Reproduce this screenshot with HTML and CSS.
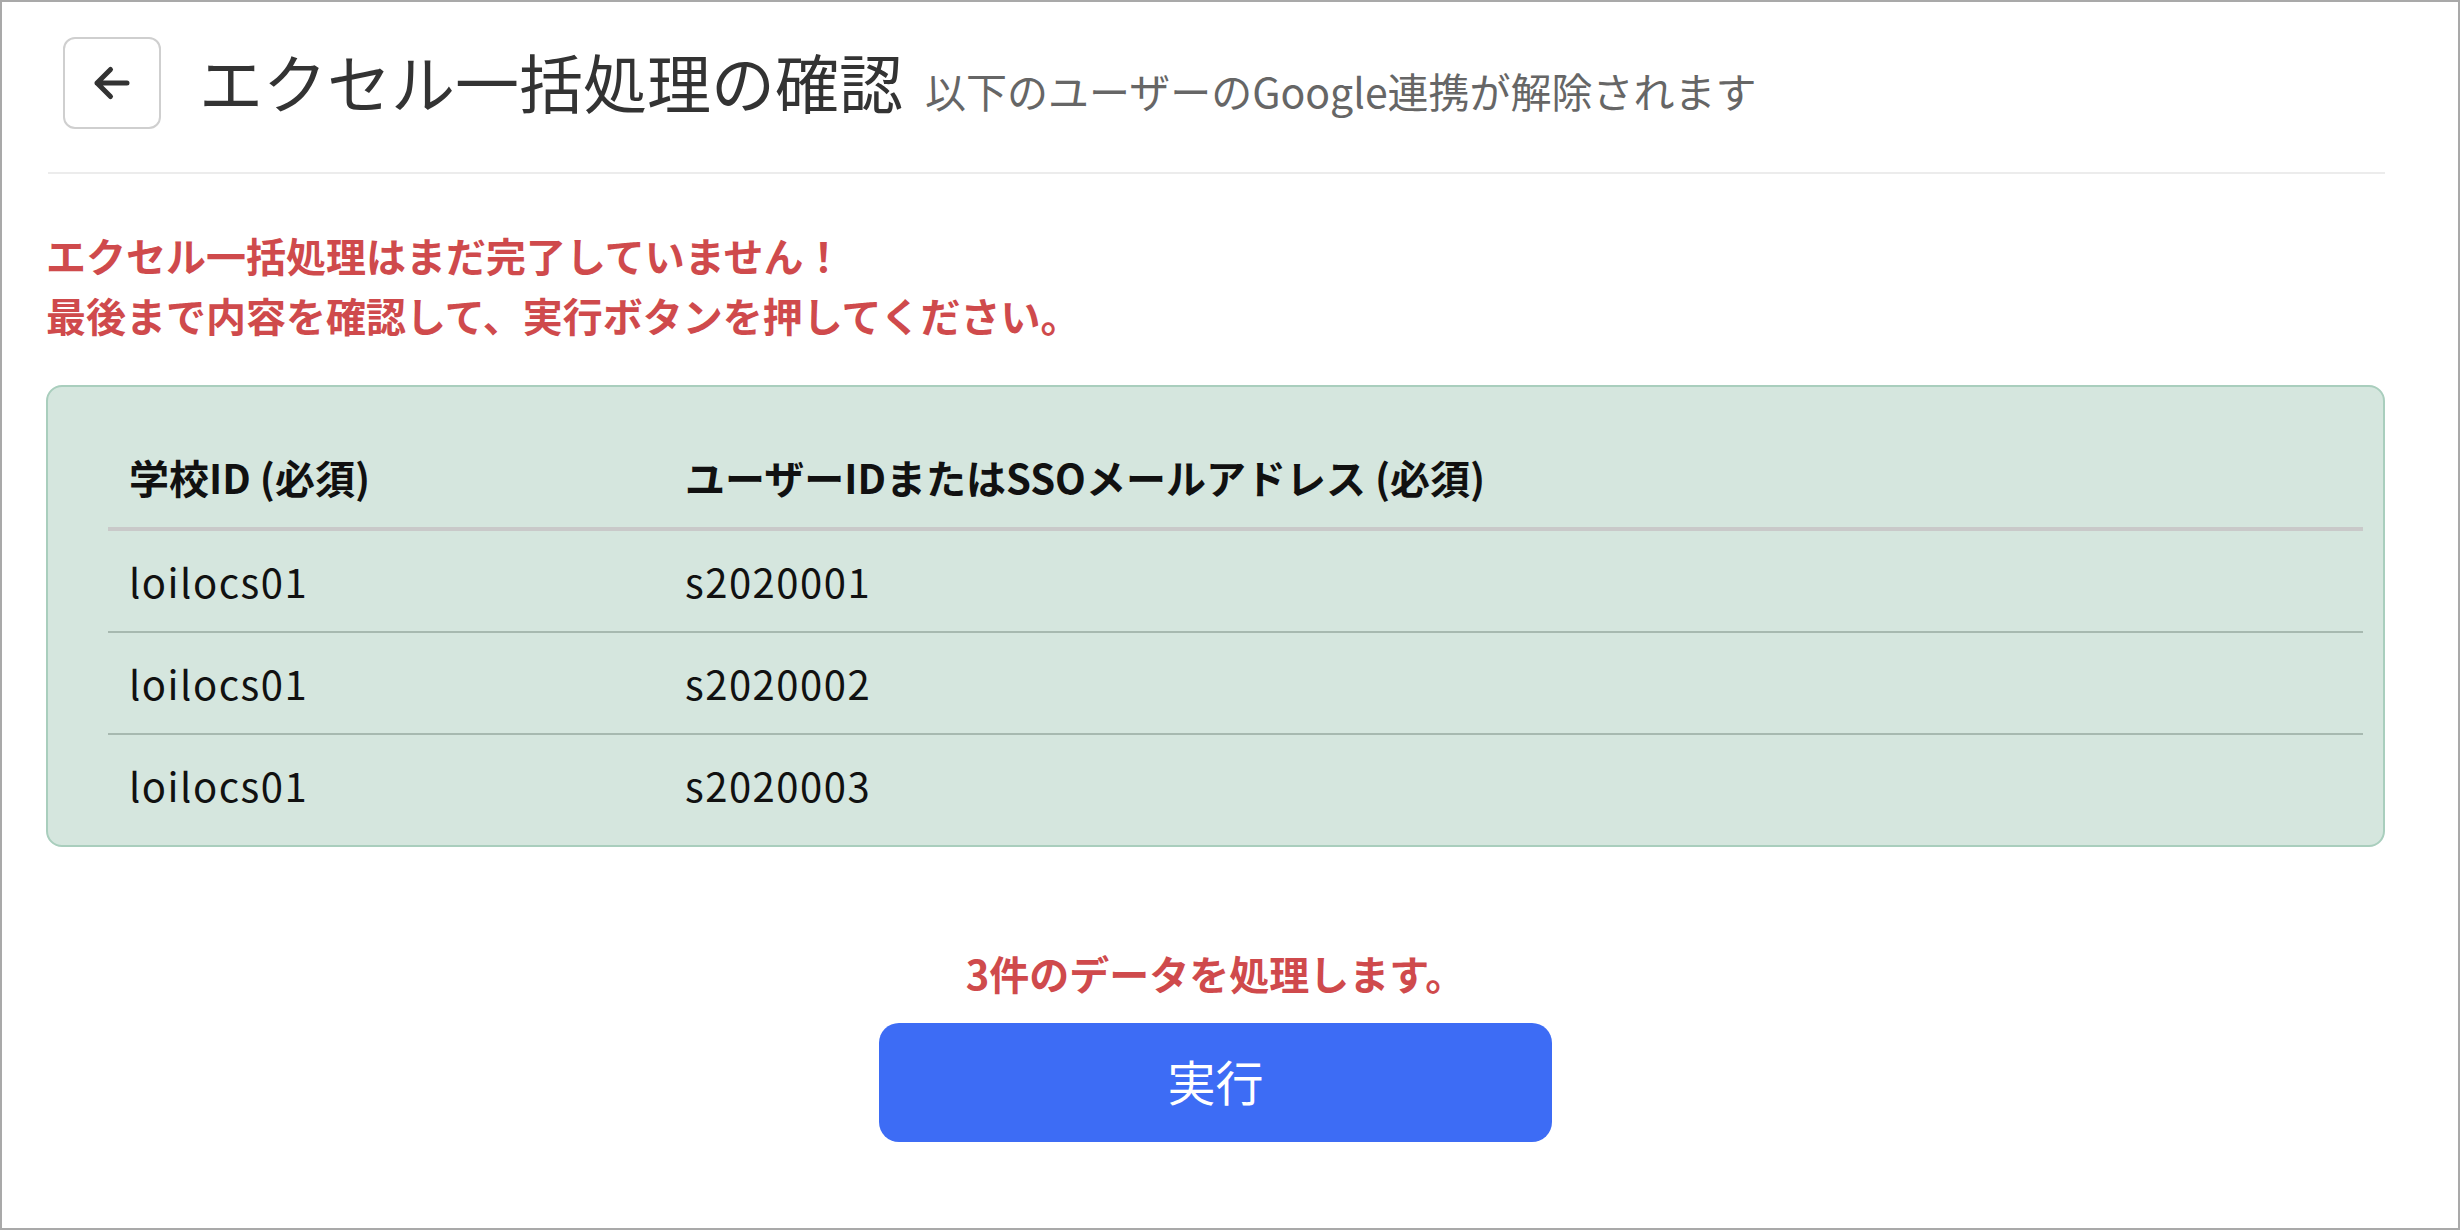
FILE: index.html
```html
<!DOCTYPE html>
<html lang="ja">
<head>
<meta charset="utf-8">
<title>エクセル一括処理の確認</title>
<link rel="stylesheet" href="styles.css">
</head>
<body>
<div class="frame">
  <main class="page">
    <header class="head">
      <button class="back" type="button" aria-label="戻る">
        <svg width="40" height="36" viewBox="0 0 40 36" aria-hidden="true">
          <path d="M5 18 H35 M5 18 L18.5 4.5 M5 18 L18.5 31.5" fill="none" stroke="#333" stroke-width="5" stroke-linecap="round" stroke-linejoin="round"/>
        </svg>
      </button>
      <div class="titles">
        <h1 class="title">エクセル一括処理の確認</h1>
        <span class="sub">以下のユーザーのGoogle連携が解除されます</span>
      </div>
    </header>
    <hr class="rule">
    <div class="warn">
      <p>エクセル一括処理はまだ完了していません！</p>
      <p>最後まで内容を確認して、実行ボタンを押してください。</p>
    </div>
    <div class="tablebox">
      <table class="data">
        <thead>
          <tr><th class="c1">学校ID (必須)</th><th>ユーザーIDまたはSSOメールアドレス (必須)</th></tr>
        </thead>
        <tbody>
          <tr><td class="c1">loilocs01</td><td>s2020001</td></tr>
          <tr><td class="c1">loilocs01</td><td>s2020002</td></tr>
          <tr><td class="c1">loilocs01</td><td>s2020003</td></tr>
        </tbody>
      </table>
    </div>
    <p class="count">3件のデータを処理します。</p>
    <div class="actions">
      <button class="run" type="button">実行</button>
    </div>
  </main>
</div>
</body>
</html>
```

FILE: styles.css
```css
* { box-sizing: border-box; }
html, body { margin: 0; padding: 0; background: #fff; }
body {
  font-family: "Noto Sans CJK JP", "Noto Sans", sans-serif;
  color: #222;
}
.frame {
  width: 2460px;
  height: 1230px;
  border: 2px solid #a9a9a9;
  overflow: hidden;
}
.page {
  margin-left: 44px;
  width: 2339px;
  padding-top: 35px;
}
.head {
  display: flex;
  align-items: center;
  height: 92px;
  padding-left: 17px;
}
.back {
  width: 98px;
  height: 92px;
  border: 2px solid #cfcfcf;
  border-radius: 12px;
  background: #fff;
  display: flex;
  align-items: center;
  justify-content: center;
  padding: 0;
  flex: none;
}
.back svg { display: block; }
.titles {
  display: flex;
  align-items: baseline;
  margin-left: 38px;
  gap: 22px;
  padding-bottom: 6px;
}
.title {
  margin: 0;
  font-size: 64px;
  font-weight: 400;
  color: #333;
  line-height: 80px;
}
.sub {
  font-size: 41px;
  color: #666;
}
.rule {
  border: 0;
  height: 2px;
  background: #ececec;
  margin: 43px 0 0 2px;
}
.warn {
  margin-top: 51px;
  color: #cf4a4c;
  font-weight: 700;
  font-size: 40px;
  line-height: 60px;
}
.warn p { margin: 0; }
.tablebox {
  margin-top: 40px;
  background: #d5e6de;
  border: 2px solid #a9cebd;
  border-radius: 16px;
  padding: 40px 20px 10px 60px;
}
.data {
  width: 100%;
  border-collapse: separate;
  border-spacing: 0;
  font-size: 40px;
  line-height: 40px;
  color: #111;
}
.data th, .data td {
  text-align: left;
  padding: 30px 21px;
}
.data td { letter-spacing: 1.5px; }
.data th {
  font-weight: 700;
  border-bottom: 4px solid #c9c9c9;
}
.data .c1 { width: 556px; }
.data tbody tr:not(:last-child) td { border-bottom: 2px solid #a7b9b0; }
.count {
  margin: 96px 0 0;
  text-align: center;
  color: #cf4a4c;
  font-weight: 700;
  font-size: 40px;
  line-height: 60px;
}
.actions {
  display: flex;
  justify-content: center;
  margin-top: 20px;
}
.run {
  width: 673px;
  height: 119px;
  border: 0;
  border-radius: 20px;
  background: #3d6cf5;
  color: #fff;
  font-family: inherit;
  font-size: 48px;
  font-weight: 400;
  padding: 0 0 6px;
}
```
